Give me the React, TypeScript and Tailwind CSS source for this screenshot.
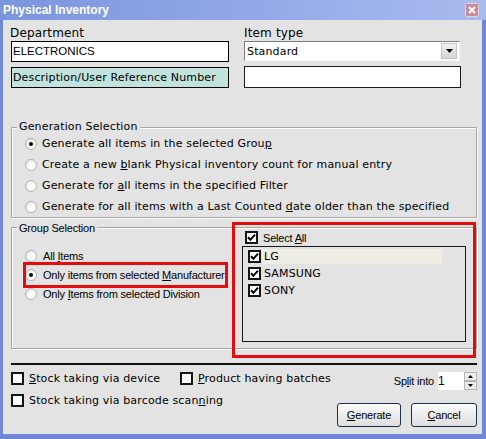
import React from "react";

const V = "font-['DejaVu_Sans',Verdana,sans-serif] text-[11px] tracking-[0.15px] text-black whitespace-nowrap";
const V12 = "font-['DejaVu_Sans',Verdana,sans-serif] text-[12px] tracking-[0.15px] text-black whitespace-nowrap";
const N = "font-['Liberation_Sans',Arial,sans-serif] text-[11px] tracking-[-0.2px] text-black whitespace-nowrap";

function U({ children }: { children: React.ReactNode }) {
  return <span className="underline underline-offset-[1px] decoration-[1px]">{children}</span>;
}

function Radio({ checked }: { checked?: boolean }) {
  return (
    <span className="flex h-[12px] w-[12px] shrink-0 items-center justify-center rounded-full border border-[#b3b3b3] bg-[radial-gradient(circle_at_65%_65%,#ffffff_35%,#d9d9d9_100%)]">
      {checked && <span className="h-[4px] w-[4px] rounded-full bg-black" />}
    </span>
  );
}

function Check({ checked }: { checked?: boolean }) {
  return (
    <span className="flex h-[13px] w-[13px] shrink-0 items-center justify-center border-2 border-[#151515] bg-white">
      {checked && (
        <svg width="9" height="9" viewBox="0 0 9 9">
          <path d="M1 4.3 L3.4 6.8 L8 1.6" fill="none" stroke="#000" strokeWidth="2" />
        </svg>
      )}
    </span>
  );
}

function GenRow({ checked, children }: { checked?: boolean; children: React.ReactNode }) {
  return (
    <div className="flex h-[21px] items-center gap-[5px]">
      <Radio checked={checked} />
      <span className={`${V} leading-[13px]`}>{children}</span>
    </div>
  );
}

function GroupRow({ checked, children }: { checked?: boolean; children: React.ReactNode }) {
  return (
    <div className="flex h-[19px] items-center gap-[6px]">
      <Radio checked={checked} />
      <span className={`${N} leading-[14px]`}>{children}</span>
    </div>
  );
}

function ListItem({ label, hl }: { label: string; hl?: boolean }) {
  return (
    <div className="flex h-[17px] items-center">
      <Check checked />
      <span
        className={`${V} ml-[1px] flex h-[15px] w-[180px] items-center pl-[2px] leading-[13px] ${hl ? "bg-[#efeee2]" : ""}`}
      >
        {label}
      </span>
    </div>
  );
}

function Button({ children, w }: { children: React.ReactNode; w: string }) {
  return (
    <div
      className={`${N} flex h-[24px] ${w} items-center justify-center rounded-[3px] border border-[#1d2f4d] bg-gradient-to-b from-[#fbfbfb] to-[#dedede] leading-[14px]`}
    >
      {children}
    </div>
  );
}

export default function App() {
  return (
    <div className="flex h-[439px] w-[486px] flex-col overflow-hidden bg-[#6f88d6] pb-[5px] pl-[3px] pr-[4px]">
      {/* Title bar */}
      <div className="-ml-[3px] -mr-[4px] flex h-[20px] shrink-0 items-center justify-between bg-gradient-to-r from-[#7b95de] to-[#a9bbef] pl-[3px] pr-[7px]">
        <span className="font-['Liberation_Sans',Arial,sans-serif] text-[12px] font-bold leading-[14px] text-white">
          Physical Inventory
        </span>
        <span className="flex h-[14px] w-[14px] items-center justify-center rounded-[2px] border border-[#e8d3da] bg-[#c78c9c]">
          <svg width="8" height="8" viewBox="0 0 8 8">
            <path d="M1 1 L7 7 M7 1 L1 7" stroke="#fff" strokeWidth="2" />
          </svg>
        </span>
      </div>

      {/* Body */}
      <div className="relative flex-1 bg-[#e3e3e3] pl-[8px] pr-[5px] pt-[6px]">
        {/* Top fields */}
        <div className="flex gap-[15px]">
          <div className="flex w-[218px] flex-col">
            <div className={`${V12} -ml-px h-[14px] leading-[14px]`}>Department</div>
            <div className="mt-[1px] flex h-[21px] items-center border border-black bg-white pl-[1px]">
              <span className="font-['Liberation_Sans',Arial,sans-serif] text-[11.5px] leading-[13px] text-black">
                ELECTRONICS
              </span>
            </div>
            <div className="mt-[5px] flex h-[21px] items-center border border-black bg-[#c2e3dd] pl-[1px]">
              <span className={`${V} leading-[13px]`}>Description/User Reference Number</span>
            </div>
          </div>
          <div className="flex w-[217px] flex-col">
            <div className={`${V12} h-[14px] leading-[14px]`}>Item type</div>
            <div className="mt-[1px] flex h-[20px] w-[216px] items-center justify-between border border-b-[#f5f5f5] border-l-[#7c7c7c] border-r-[#f5f5f5] border-t-[#7c7c7c] bg-white pl-[2px] pr-[2px]">
              <span className={`${V} text-[11.5px] leading-[13px]`}>Standard</span>
              <span className="flex h-[16px] w-[16px] items-center justify-center border border-[#c4c4c4] bg-gradient-to-b from-[#f2f2f2] to-[#d4d4d4]">
                <svg width="7" height="4" viewBox="0 0 7 4">
                  <path d="M0 0 H7 L3.5 4 Z" fill="#000" />
                </svg>
              </span>
            </div>
            <div className="mt-[5px] h-[22px] border border-[#1b1b1b] bg-white" />
          </div>
        </div>

        {/* Generation Selection */}
        <div className="relative mt-[39px] border border-[#a5a5a5] pl-[13px] pt-[5px] shadow-[inset_1px_1px_0_#ffffff,1px_1px_0_#ffffff]">
          <span className={`${V} absolute -top-[8px] left-[5px] bg-[#e3e3e3] px-[2px] leading-[13px]`}>
            Generation Selection
          </span>
          <GenRow checked>
            Generate all items in the selected Grou<U>p</U>
          </GenRow>
          <GenRow>
            Create a new <U>b</U>lank Physical inventory count for manual entry
          </GenRow>
          <GenRow>
            Generate for <U>a</U>ll items in the specified Filter
          </GenRow>
          <GenRow>
            Generate for all items with a Last Counted <U>d</U>ate older than the specified
          </GenRow>
        </div>

        {/* Group Selection */}
        <div className="relative mt-[9px] flex border border-[#a5a5a5] pr-[10px] shadow-[inset_1px_1px_0_#ffffff,1px_1px_0_#ffffff]">
          <span className={`${N} absolute -top-[7px] left-[5px] bg-[#e3e3e3] px-[2px] leading-[14px]`}>
            Group Selection
          </span>
          <div className="flex-1 pl-[13px] pt-[18px]">
            <GroupRow>
              All <U>I</U>tems
            </GroupRow>
            <GroupRow checked>
              Only items from selected <U>M</U>anufacturer
            </GroupRow>
            <GroupRow>
              Only <U>I</U>tems from selected Division
            </GroupRow>
          </div>
          <div className="flex w-[224px] flex-col pb-[6px] pt-[3px]">
            <div className="flex h-[13px] items-center gap-[5px] pl-[3px]">
              <Check checked />
              <span className={`${N} leading-[14px]`}>
                Select <U>A</U>ll
              </span>
            </div>
            <div className="mt-[2px] h-[96px] border border-[#1a1a1a] pl-[5px] pt-[1px]">
              <ListItem label="LG" hl />
              <ListItem label="SAMSUNG" />
              <ListItem label="SONY" />
            </div>
          </div>
        </div>

        {/* Separator */}
        <div className="mt-[14px] h-[2px] bg-[#111111]" />

        {/* Bottom */}
        <div className="flex">
          <div className="flex flex-1 flex-col pt-[2px]">
            <div className="flex h-[22px] items-center">
              <div className="flex w-[169px] items-center gap-[5px]">
                <Check />
                <span className={`${V} leading-[13px]`}>
                  <U>S</U>tock taking via device
                </span>
              </div>
              <div className="flex items-center gap-[5px]">
                <Check />
                <span className={`${V} leading-[13px]`}>
                  <U>P</U>roduct having batches
                </span>
              </div>
            </div>
            <div className="flex h-[22px] items-center gap-[5px]">
              <Check />
              <span className={`${V} leading-[13px]`}>
                Stock taking via barcode scan<U>n</U>ing
              </span>
            </div>
          </div>
          <div className="flex flex-col items-end">
            <div className="mt-[7px] flex h-[18px] items-center">
              <span className={`${N} mr-[4px] leading-[14px]`}>
                Sp<U>l</U>it into
              </span>
              <span className={`${N} flex h-[18px] w-[26px] items-center bg-white text-[12px] leading-[14px]`}>1</span>
              <span className="flex h-[18px] w-[13px] flex-col">
                <span className="flex h-[9px] items-center justify-center border border-[#b5b5b5] bg-[#ececec]">
                  <svg width="5" height="3" viewBox="0 0 5 3">
                    <path d="M0 3 H5 L2.5 0 Z" fill="#000" />
                  </svg>
                </span>
                <span className="flex h-[9px] items-center justify-center border border-[#b5b5b5] bg-[#ececec]">
                  <svg width="5" height="3" viewBox="0 0 5 3">
                    <path d="M0 0 H5 L2.5 3 Z" fill="#000" />
                  </svg>
                </span>
              </span>
            </div>
            <div className="mt-[13px] flex gap-[10px]">
              <Button w="w-[64px]">
                <U>G</U>enerate
              </Button>
              <Button w="w-[66px]">
                <U>C</U>ancel
              </Button>
            </div>
          </div>
        </div>

        {/* Red annotation boxes */}
        <div className="pointer-events-none absolute left-[229px] top-[202px] h-[136px] w-[244px] border-[3px] border-[#e30d0d]" />
        <div className="pointer-events-none absolute left-[20px] top-[242px] h-[26px] w-[205px] border-[3px] border-[#e30d0d]" />
      </div>
    </div>
  );
}
